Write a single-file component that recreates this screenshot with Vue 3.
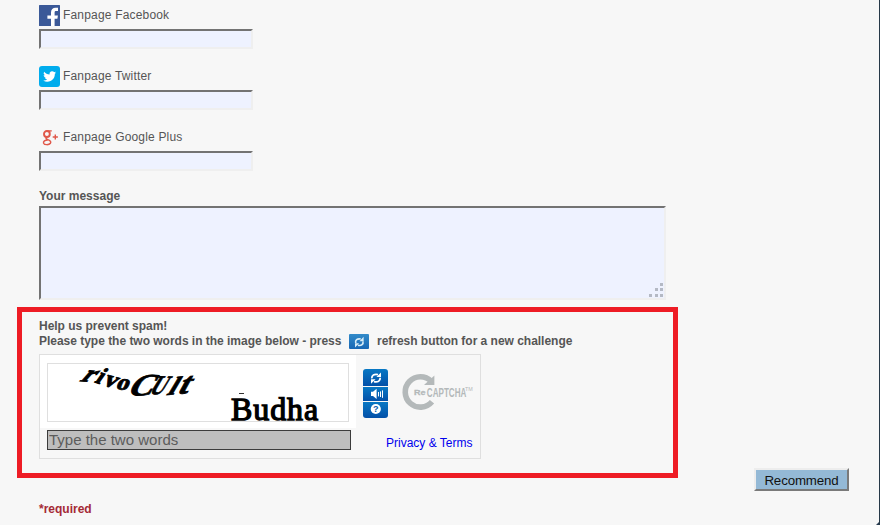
<script setup>
const networks = [
  { id: 'facebook', label: 'Fanpage Facebook' },
  { id: 'twitter', label: 'Fanpage Twitter' },
  { id: 'google', label: 'Fanpage Google Plus' },
]
</script>

<template>
  <main class="page">
    <div class="networks">
      <section v-for="n in networks" :key="n.id" class="field">
        <label class="net-label" :for="n.id">
          <svg v-if="n.id === 'facebook'" class="net-icon" viewBox="0 0 21 21">
            <rect width="21" height="21" rx="0.5" fill="#3b5998" />
            <path d="M12 21V13.8H8.4V10.4H12V7.6C12 4.3 13.8 2.8 16.6 2.8H19V6H17.2C15.7 6 15.6 6.6 15.6 7.8V10.4H18.9L18.4 13.8H15.6V21Z" fill="#fff" />
          </svg>
          <svg v-else-if="n.id === 'twitter'" class="net-icon" viewBox="0 0 21 21">
            <rect width="21" height="21" rx="3" fill="#00aced" />
            <path transform="translate(4.2 4) scale(.54)" d="M23.95 4.57a10 10 0 0 1-2.82.77 4.96 4.96 0 0 0 2.16-2.72c-.95.55-2 .95-3.13 1.18a4.92 4.92 0 0 0-8.38 4.48C7.69 8.1 4.07 6.13 1.64 3.16a4.92 4.92 0 0 0 1.52 6.57 4.9 4.9 0 0 1-2.23-.61v.06c0 2.39 1.7 4.38 3.95 4.83a5 5 0 0 1-2.21.08 4.94 4.94 0 0 0 4.6 3.42A9.87 9.87 0 0 1 0 19.54a13.99 13.99 0 0 0 7.55 2.21c9.05 0 14-7.5 14-13.98v-.64a9.94 9.94 0 0 0 2.4-2.56z" fill="#fff" />
          </svg>
          <svg v-else class="net-icon" viewBox="0 0 21 21" fill="none" stroke="#e0584a">
            <ellipse cx="7.9" cy="7" rx="2.9" ry="3" stroke-width="1.9" />
            <path d="M7.8 3.8H12.8M10 4.2L11 5.4" stroke-width="1.2" />
            <path d="M7.4 10C6.2 11.2 7.4 11.8 9 12.6C11.6 13.8 12.2 14.8 11.4 16.2C10 18.2 5.4 18 4.6 16.2C4 14.4 6 13 8.8 13" stroke-width="1.5" />
            <path d="M13.7 10H18.9M16.3 7.4V12.6" stroke-width="1.4" />
          </svg>
          <span>{{ n.label }}</span>
        </label>
        <input :id="n.id" class="net-input" type="text" />
      </section>
    </div>

    <label class="msg-label" for="message">Your message</label>
    <div class="message-wrap">
      <textarea id="message" class="message"></textarea>
      <svg class="grip" viewBox="0 0 16 16" fill="#b4b9c4">
        <rect x="12" y="1" width="3" height="3" />
        <rect x="7" y="6" width="3" height="3" /><rect x="12" y="6" width="3" height="3" />
        <rect x="1" y="12" width="3" height="3" /><rect x="7" y="12" width="3" height="3" /><rect x="12" y="12" width="3" height="3" />
      </svg>
    </div>

    <section class="spam">
      <p class="help">Help us prevent spam!</p>
      <p class="help">
        <span class="before">Please type the two words in the image below - press</span>
        <svg class="mini" viewBox="0 0 20 15">
          <defs>
            <linearGradient id="mg" x1="0" y1="0" x2="0" y2="1"><stop offset="0" stop-color="#338bc9" /><stop offset="1" stop-color="#1767b5" /></linearGradient>
          </defs>
          <rect width="20" height="15" rx="1" fill="url(#mg)" />
          <g transform="translate(-1.2 -.2) scale(.9)">
            <path d="M8.8 10.4C8 7 10.4 5 14.4 5.8M16.8 8.4C17.6 11.6 15.2 13.6 11.2 12.8" fill="none" stroke="#d8edf8" stroke-width="1.8" />
            <path d="M17.6 3.4V8.2H13ZM8 15.2V10.4H12.6Z" fill="#d8edf8" />
          </g>
        </svg>
        <span class="after">refresh button for a new challenge</span>
      </p>

      <div class="captcha">
        <div class="challenge">
          <div class="white">
            <svg class="words" viewBox="0 0 300 57">
              <g class="warped">
                <text transform="matrix(1.2 .1 -.95 1.05 31 17)" font-size="22">r</text>
                <text transform="matrix(1 .35 -.7 1 46 18)" font-size="21">i</text>
                <text transform="matrix(1.1 .3 -.6 1 54 21)" font-size="22">v</text>
                <text transform="matrix(1.1 .1 -.4 .95 67 25)" font-size="23">o</text>
                <text transform="matrix(1.15 -.05 -.55 1 78 32)" font-size="31">C</text>
                <text transform="matrix(.75 .02 -.6 1 100 30)" font-size="27">U</text>
                <text transform="matrix(1.1 -.08 -.6 1 118 31)" font-size="26">l</text>
                <text transform="matrix(1.2 -.1 -.6 1.1 128 30)" font-size="28">t</text>
              </g>
              <text class="budha" transform="translate(183 55.5)">Budha</text>
              <path d="M191 29.5H196" stroke="#333" stroke-width="1" />
            </svg>
          </div>
          <input class="answer" type="text" placeholder="Type the two words" />
        </div>
        <div class="tools">
          <svg class="tool-stack" viewBox="0 0 25 49">
            <defs>
              <linearGradient id="tg" x1="0" y1="0" x2="0" y2="1"><stop offset="0" stop-color="#0878c4" /><stop offset="1" stop-color="#0350a8" /></linearGradient>
            </defs>
            <path d="M3 0H22Q25 0 25 3V17H0V3Q0 0 3 0Z" fill="url(#tg)" />
            <rect y="18" width="25" height="14" fill="url(#tg)" />
            <path d="M0 33H25V46Q25 49 22 49H3Q0 49 0 46Z" fill="url(#tg)" />
            <path d="M8.8 9.4C8.6 6.2 11.2 4.9 15 5.6M17.2 8.8C17.4 12 14.8 13.3 11 12.6" fill="none" stroke="#fff" stroke-width="1.8" />
            <path d="M18 3.4V8H13.4ZM8 14.8V10.2H12.6Z" fill="#fff" />
            <path d="M8 22.8H10L13.6 19.8V30L10 27H8Z" fill="#fff" />
            <path d="M15.5 23V27.4M17.5 22.4V28M19.5 21.4V28.8" stroke="#fff" stroke-width="1" />
            <circle cx="12.8" cy="40" r="5.1" fill="#fff" />
            <text x="12.8" y="43.3" class="question">?</text>
          </svg>
          <svg class="logo" viewBox="0 0 76 38">
            <path d="M30.2 8.2A15.2 15.2 0 1 0 31 28.8" fill="none" stroke="#b4b9ba" stroke-width="5.6" />
            <path d="M33.4 2.4V12H23Z" fill="#b4b9ba" />
            <path d="M12 16.5H36V23H12Z" fill="#f7f7f7" />
            <text transform="translate(13 22.2) scale(1.2 1)" class="re">Re</text>
            <text transform="translate(25.8 24) scale(.6 1)" class="cap">CAPTCHA</text>
            <text transform="translate(64 17.6) scale(1.2 1)" class="tm">TM</text>
          </svg>
          <a class="privacy">Privacy &amp; Terms</a>
        </div>
      </div>
    </section>

    <footer class="foot">
      <span class="required">*required</span>
      <button class="recommend" type="button">Recommend</button>
    </footer>
    <svg class="corner" viewBox="0 0 3 3"><path d="M3 0V3H0Z" fill="#283c50" /></svg>
  </main>
</template>

<style>
body { background: #f7f7f7; }
</style>

<style scoped>
.page {
  position: relative;
  box-sizing: border-box;
  width: 880px;
  height: 525px;
  overflow: hidden;
  padding-top: 5px;
  background: #f7f7f7;
  border-right: 1px solid #263848;
  color: #555;
  font-family: "Liberation Sans", Arial, sans-serif;
  font-size: 12px;
}
.networks { display: flex; flex-direction: column; gap: 17px; padding-left: 39px; }
.field { display: flex; flex-direction: column; gap: 3px; align-items: flex-start; }
.net-label { display: flex; align-items: center; gap: 3px; height: 21px; letter-spacing: .18px; line-height: 18px; }
.net-label span { padding-bottom: 2px; }
.net-icon { width: 21px; height: 21px; }
.net-input, .message {
  display: block;
  box-sizing: border-box;
  margin: 0;
  background: #eef2ff;
  border: 2px solid #efefef;
  border-top-color: #737373;
  border-left-color: #737373;
  border-radius: 0;
}
.net-input { width: 214px; height: 20px; }
.msg-label { display: block; height: 16px; line-height: 16px; margin: 17px 0 2px 39px; font-weight: bold; }
.message-wrap { position: relative; width: 627px; height: 94px; margin-left: 39px; }
.message { width: 627px; height: 94px; resize: none; }
.grip { position: absolute; right: 2px; bottom: 2px; width: 16px; height: 16px; }
.spam {
  box-sizing: border-box;
  width: 661px;
  height: 171px;
  margin: 7px 0 0 17px;
  padding: 7px 0 0 17px;
  border: 5px solid #ee1c25;
}
.help { display: flex; margin: 0; height: 15px; line-height: 15px; font-weight: bold; white-space: nowrap; letter-spacing: -.02px; }
.help .before { width: 310px; }
.mini { width: 20px; height: 15px; }
.help .after { margin-left: 8px; }
.captcha {
  display: flex;
  box-sizing: border-box;
  width: 442px;
  height: 105px;
  margin-top: 5px;
  border: 1px solid #dfdfdf;
}
.challenge { width: 316px; }
.white { box-sizing: border-box; height: 73px; padding: 8px 0 0 7px; background: #fff; }
.words { display: block; width: 300px; height: 57px; border: 1px solid #dfdfdf; overflow: visible; }
.warped { font-family: "Liberation Serif", serif; font-weight: bold; fill: #000; stroke: #000; stroke-width: .8; }
.budha { font: 32px "Liberation Serif", serif; fill: #000; stroke: #000; stroke-width: 1.3; letter-spacing: .9px; }
.answer {
  display: block;
  box-sizing: border-box;
  width: 304px;
  height: 20px;
  margin: 2px 0 0 7px;
  padding: 0 1px 2px;
  background: #bebebe;
  border: 1px solid #3c3c3c;
  border-radius: 0;
  font: 15px "Liberation Sans", Arial, sans-serif;
}
.answer::placeholder { color: #5c5c5c; opacity: 1; }
.tools {
  display: grid;
  grid-template-columns: 25px 76px;
  grid-template-rows: 49px auto;
  column-gap: 13px;
  align-content: start;
  padding: 14px 0 0 7px;
}
.tool-stack { width: 25px; height: 49px; }
.logo { width: 76px; height: 38px; margin-top: 4px; overflow: visible; }
.question { font: bold 9px "Liberation Sans", Arial, sans-serif; fill: #075cac; text-anchor: middle; }
.re { font: bold 7.5px "Liberation Sans", Arial, sans-serif; fill: #b4b9ba; stroke: #b4b9ba; stroke-width: .3; }
.cap { font: bold 13.5px "Liberation Sans", Arial, sans-serif; fill: #b4b9ba; }
.tm { font: 4.5px "Liberation Sans", Arial, sans-serif; fill: #b4b9ba; }
.privacy { grid-column: 1 / 3; margin: 17px 0 0 23px; color: #0000ee; line-height: 16px; white-space: nowrap; }
.foot { display: flex; justify-content: space-between; height: 47px; margin-top: -10px; padding: 0 30px 0 39px; }
.required { align-self: flex-end; height: 15px; line-height: 15px; color: #a52a36; font-weight: bold; margin-bottom: -2px; }
.recommend {
  box-sizing: border-box;
  width: 95px;
  height: 23px;
  padding: 2px 0 0;
  background: #94b9d6;
  border: 2px solid;
  border-color: #ededed #7a7a7a #7a7a7a #ededed;
  border-radius: 0;
  color: #111;
  font: 13.33px "Liberation Sans", Arial, sans-serif;
  letter-spacing: -.15px;
}
.corner { position: absolute; right: 0; bottom: 0; width: 3px; height: 3px; }
</style>
